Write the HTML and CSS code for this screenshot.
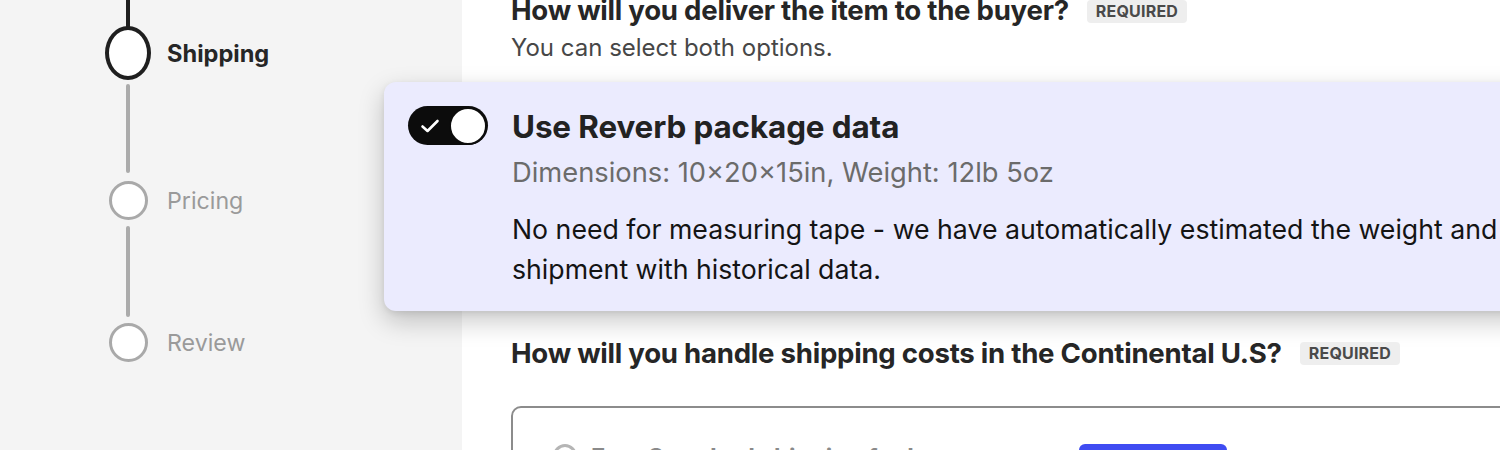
FILE: index.html
```html
<!DOCTYPE html>
<html lang="en">
<head>
<meta charset="utf-8">
<title>Shipping</title>
<link rel="stylesheet" href="styles.css">
</head>
<body>
<div class="page">
  <aside class="sidebar">
    <div class="steps">
      <div class="line line-top"></div>
      <div class="step step-active">
        <span class="dot dot-active"></span>
        <span class="label label-active">Shipping</span>
      </div>
      <div class="line line-a"></div>
      <div class="step">
        <span class="dot"></span>
        <span class="label">Pricing</span>
      </div>
      <div class="line line-b"></div>
      <div class="step">
        <span class="dot"></span>
        <span class="label">Review</span>
      </div>
    </div>
  </aside>
  <main class="main">
    <div class="question q1">
      <h2 class="q-title">How will you deliver the item to the buyer?</h2>
      <span class="badge">REQUIRED</span>
    </div>
    <p class="hint">You can select both options.</p>

    <section class="card">
      <div class="toggle" role="switch" aria-checked="true">
        <svg class="check" width="20" height="16" viewBox="0 0 20 16" aria-hidden="true">
          <path d="M2.5 8.5 L7.5 13 L17.5 3" fill="none" stroke="#fff" stroke-width="2.6" stroke-linecap="round" stroke-linejoin="round"/>
        </svg>
        <span class="knob"></span>
      </div>
      <div class="card-text">
        <h3 class="card-title">Use Reverb package data</h3>
        <p class="card-meta">Dimensions: 10×20×15in, Weight: 12lb 5oz</p>
        <p class="card-body">No need for measuring tape - we have automatically estimated the weight and dimensions of your shipment with historical data.</p>
      </div>
    </section>

    <div class="question q2">
      <h2 class="q-title">How will you handle shipping costs in the Continental U.S?</h2>
      <span class="badge">REQUIRED</span>
    </div>

    <div class="option-box">
      <span class="radio"></span>
      <span class="option-label">Free Standard shipping for buyers</span>
      <span class="option-btn">Recommended</span>
    </div>
  </main>
</div>
</body>
</html>
```

FILE: styles.css
```css
* { box-sizing: border-box; }

html, body {
  margin: 0;
  padding: 0;
  width: 1500px;
  height: 450px;
  overflow: hidden;
  background: #ffffff;
  font-family: "Inter", "Liberation Sans", sans-serif;
}

.page {
  display: flex;
  height: 450px;
  overflow: hidden;
}

/* ---------- sidebar ---------- */
.sidebar {
  width: 462px;
  flex: none;
  background: #f4f4f4;
  padding-left: 105px;
}

.steps {
  display: flex;
  flex-direction: column;
}

.step {
  display: flex;
  align-items: center;
  height: 33px;
}

.step-active { height: 46px; }

.dot {
  width: 46px;
  height: 33px;
  display: flex;
  align-items: center;
  justify-content: center;
  flex: none;
}

.dot::before {
  content: "";
  width: 33px;
  height: 33px;
  border-radius: 50%;
  border: 3.3px solid #a9a9a9;
  background: #ffffff;
}

.dot-active { height: 46px; }

.dot-active::before {
  width: 46px;
  height: 46px;
  border: 4.5px solid #1f1f1f;
}

.label {
  margin-left: 16px;
  font-size: 23.2px;
  color: #9a9a9a;
}

.label-active {
  font-size: 23.6px;
  font-weight: 700;
  color: #262626;
}

.line {
  width: 3.5px;
  margin-left: 21.3px;
  border-radius: 2px;
  background: #ababab;
}

.line-top {
  height: 30px;
  background: #1f1f1f;
  border-radius: 0 0 2px 2px;
}

.line-a {
  height: 89px;
  margin-top: 8px;
  margin-bottom: 11px;
}

.line-b {
  height: 91px;
  margin-top: 9px;
  margin-bottom: 9px;
}

/* ---------- main ---------- */
.main {
  flex: 1;
  padding-left: 49px;
  display: flex;
  flex-direction: column;
  min-width: 0;
}

.question {
  display: flex;
  align-items: center;
  gap: 18px;
  white-space: nowrap;
}

.q1 { margin-top: -6px; }

.q-title {
  margin: 0;
  font-size: 27.6px;
  line-height: 32px;
  font-weight: 700;
  color: #262626;
  letter-spacing: -0.25px;
}

.badge {
  background: #eeeeee;
  color: #4a4a4a;
  font-size: 16px;
  font-weight: 700;
  line-height: 23px;
  padding: 0 9px;
  border-radius: 4px;
  letter-spacing: 0.2px;
}

.q1 .badge { margin-top: 2px; }

.hint {
  margin: 7px 0 0;
  font-size: 24px;
  line-height: 30px;
  color: #474747;
}

/* ---------- card ---------- */
.card {
  margin-top: 19px;
  margin-left: -127px;
  margin-right: -40px;
  background: #ebebfe;
  border-radius: 12px;
  box-shadow: 0 10px 26px rgba(0, 0, 0, 0.22), 0 2px 6px rgba(0, 0, 0, 0.08);
  display: flex;
  align-items: flex-start;
  gap: 24px;
  padding: 24px 24px 22px 24px;
  height: 229px;
  flex: none;
}

.toggle {
  width: 80px;
  height: 39px;
  flex: none;
  background: #0c0c0c;
  border-radius: 20px;
  display: flex;
  align-items: center;
  justify-content: space-between;
  padding: 0 1px 0 12px;
}

.check { display: block; }

.knob {
  width: 38px;
  height: 38px;
  border-radius: 50%;
  background: #ffffff;
  border: 2px solid #0c0c0c;
}

.card-text {
  padding-top: 1px;
  white-space: nowrap;
}

.card-title {
  margin: 0;
  font-size: 31.4px;
  line-height: 40px;
  font-weight: 700;
  color: #222222;
  letter-spacing: -0.1px;
}

.card-meta {
  margin: 8px 0 0;
  font-size: 27.3px;
  line-height: 36px;
  color: #6b6b6b;
}

.card-body {
  margin: 18px 0 0;
  font-size: 26.7px;
  line-height: 40px;
  color: #141414;
  white-space: normal;
  width: 1290px;
}

.q2 { margin-top: 26px; }

/* ---------- option box ---------- */
.option-box {
  margin-top: 37px;
  margin-right: -20px;
  height: 120px;
  flex: none;
  border: 2px solid #8c8c8c;
  border-radius: 10px;
  background: #ffffff;
  display: flex;
  align-items: flex-start;
  padding: 36px 0 0 40px;
  gap: 14px;
}

.radio {
  width: 24px;
  height: 24px;
  border-radius: 50%;
  border: 3px solid #b5b5b5;
  flex: none;
}

.option-label {
  font-size: 24px;
  line-height: 28px;
  font-weight: 700;
  color: #8a8a8a;
  width: 474px;
  white-space: nowrap;
  overflow: hidden;
}

.option-btn {
  background: #3f4cf2;
  color: #ffffff;
  font-size: 17px;
  font-weight: 700;
  line-height: 38px;
  width: 148px;
  text-align: center;
  border-radius: 6px;
}
```
